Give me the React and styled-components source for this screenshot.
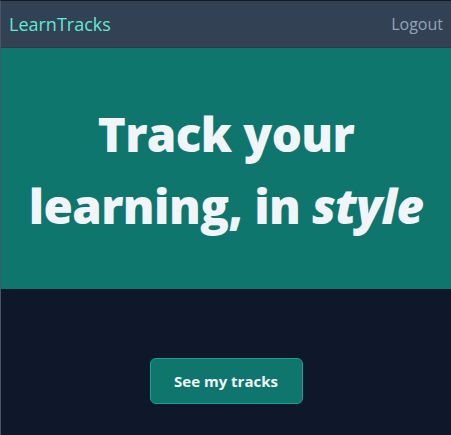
import React from 'react';
import styled, { createGlobalStyle } from 'styled-components';

const GlobalStyle = createGlobalStyle`
  html, body {
    margin: 0;
    padding: 0;
    background: #0f172a;
  }
  body {
    font-family: "Open Sans", "Noto Sans", sans-serif;
  }
`;

const Page = styled.div`
  min-height: 435px;
  box-sizing: border-box;
  border-top: 1px solid #141a22;
  border-left: 1px solid #4b5563;
  background: #0f172a;
  display: flex;
  flex-direction: column;
`;

const NavBar = styled.nav`
  height: 47px;
  box-sizing: border-box;
  background: #334155;
  border-bottom: 1px solid #2b3a4a;
  display: flex;
  align-items: center;
  justify-content: space-between;
  padding: 0 8px;
`;

const Brand = styled.a`
  color: #5eead4;
  font-size: 18px;
  text-decoration: none;
`;

const NavLink = styled.a`
  color: #94a3b8;
  font-size: 16px;
  text-decoration: none;
`;

const Hero = styled.section`
  height: 241px;
  background: #0f766e;
  display: flex;
  align-items: center;
  justify-content: center;
`;

const Title = styled.h1`
  margin: 0;
  padding-top: 2px;
  color: #f1f5f9;
  font-size: 47.5px;
  line-height: 72px;
  font-weight: 800;
  text-align: center;
  letter-spacing: -0.6px;

  em {
    font-style: italic;
  }
`;

const Actions = styled.div`
  display: flex;
  justify-content: center;
  padding-top: 69px;
`;

const Button = styled.button`
  width: 153px;
  height: 46px;
  background: #0f766e;
  color: #f1f5f9;
  border: 1px solid #14a394;
  border-radius: 6px;
  font-family: inherit;
  font-size: 15px;
  font-weight: 700;
  cursor: pointer;
`;

const App = () => (
  <>
    <GlobalStyle />
    <Page>
      <NavBar>
        <Brand href="#">LearnTracks</Brand>
        <NavLink href="#">Logout</NavLink>
      </NavBar>
      <Hero>
        <Title>
          Track your
          <br />
          learning, in <em>style</em>
        </Title>
      </Hero>
      <Actions>
        <Button type="button">See my tracks</Button>
      </Actions>
    </Page>
  </>
);

export default App;
